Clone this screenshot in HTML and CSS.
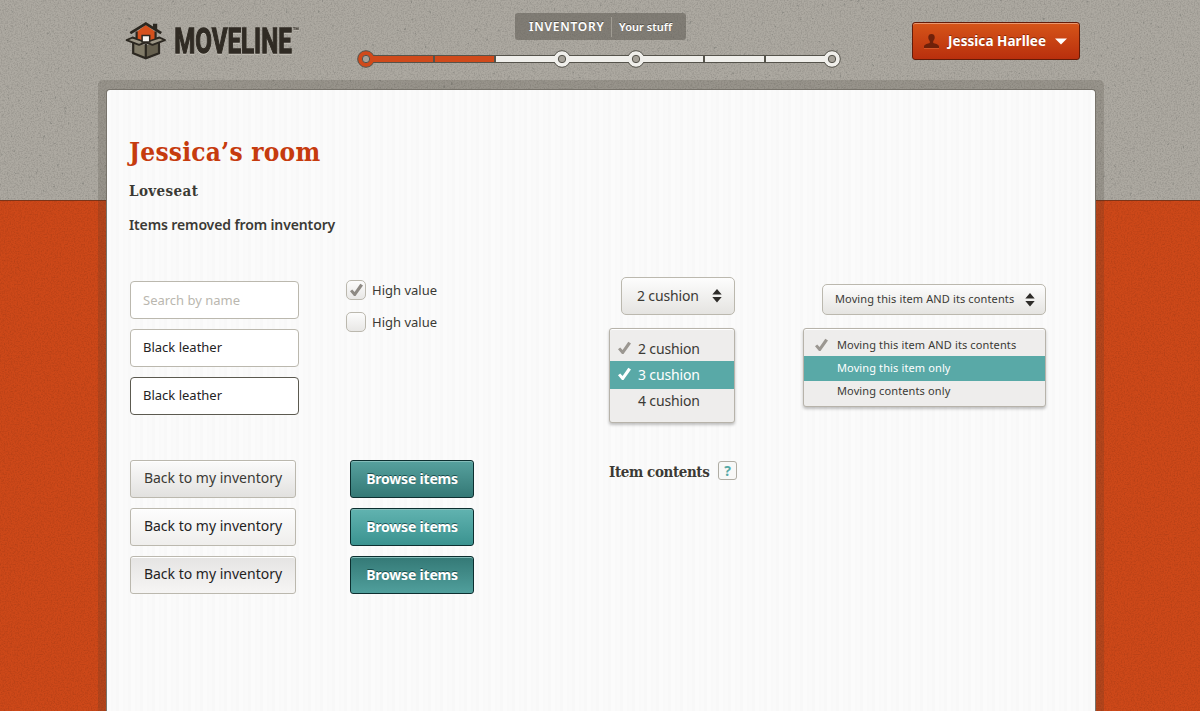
FILE: index.html
```html
<!DOCTYPE html>
<html lang="en">
<head>
<meta charset="utf-8">
<title>Moveline – Inventory</title>
<link rel="stylesheet" href="styles.css">
</head>
<body>
<svg class="texture" width="1200" height="711" aria-hidden="true">
  <defs>
    <filter id="grain" x="0" y="0" width="100%" height="100%">
      <feTurbulence type="fractalNoise" baseFrequency="0.7" numOctaves="2" seed="4"/>
      <feColorMatrix values="0 0 0 0 0  0 0 0 0 0  0 0 0 0 0  0.9 0 0 0 -0.36"/>
    </filter>
    <filter id="specks" x="0" y="0" width="100%" height="100%">
      <feTurbulence type="fractalNoise" baseFrequency="0.28" numOctaves="2" seed="9"/>
      <feColorMatrix values="0 0 0 0 0.2  0 0 0 0 0.2  0 0 0 0 0.18  8 0 0 0 -5.7"/>
    </filter>
  </defs>
  <rect width="1200" height="200" fill="#ada9a1"/>
  <rect y="200" width="1200" height="511" fill="#cd4819"/>
  <rect width="1200" height="200" filter="url(#grain)" opacity=".3"/>
  <rect width="1200" height="200" filter="url(#specks)" opacity=".6"/>
  <rect y="200" width="1200" height="511" filter="url(#grain)" opacity=".25"/>
  <rect y="200" width="1200" height="1" fill="#7d3418"/>
</svg>
<div class="page">
  <header class="header">
    <div class="logo">
      <svg class="logo-mark" width="42" height="38" viewBox="0 0 42 38">
        <path d="M11.500 10 20.800 3 30.500 10V20H11.500z" fill="#d5501c"/>
        <path d="M7.500 19.500 20.800 23.500V36.500L7.500 31z" fill="#817b68"/>
        <path d="M20.800 23.500 34.500 19.500V31L20.800 36.500z" fill="#655f4e"/>
        <path d="M7.500 15.500 20.800 20 34.500 15.500 40 18.200 27.500 22.800 20.800 20.300 14 22.800 1.600 18.200z" fill="#9b9585" stroke="#2b2720" stroke-width="1.900" stroke-linejoin="round"/>
        <path d="M12.700 10 20.800 4 29.500 10V16.600L20.800 19.500 12.700 16.600z" fill="#d5501c"/>
        <path d="M17.100 20v-6.600h7.600v6.600z" fill="#f4f2ed" stroke="#2b2720" stroke-width="1.500"/>
        <path d="M8.200 20.500V31.200L20.800 36.300 34 31.200V20.500M20.800 21.500V36M11.600 9.500v6.500M30.600 9.500v6.500" fill="none" stroke="#2b2720" stroke-width="2.200"/>
        <path d="M5.300 11.200 20.800 1.600 36.200 11.200" fill="none" stroke="#2b2720" stroke-width="2.700"/>
        <path d="M28 1.800h4.200v7L28 6z" fill="#2b2720"/>
      </svg>
      <svg class="logo-word" width="130" height="48" viewBox="0 -5 130 48">
        <text class="wordmark" transform="translate(.2 31) scale(.69 1)">MOVELINE</text>
        <text class="trademark" x="118.500" y="13">™</text>
      </svg>
    </div>
    <div class="progress">
      <div class="stage"><span class="stage-name">INVENTORY</span><span class="stage-sub">Your stuff</span></div>
      <svg class="track" width="486" height="20" viewBox="0 0 486 20">
        <g stroke="#55534b">
          <rect x="10.500" y="6.500" width="466" height="7" fill="#f0efeb"/>
          <path d="M10 6.500h129v7H10z" fill="#d04a1b"/>
          <path d="M78 6v8M139 6v8M348 6v8M409 6v8" stroke-width="2"/>
          <circle cx="10" cy="10" r="8.300" fill="#d04a1b"/>
          <circle cx="206" cy="10" r="8.300" fill="#f0efeb"/>
          <circle cx="280" cy="10" r="8.300" fill="#f0efeb"/>
          <circle cx="476" cy="10" r="8.300" fill="#f0efeb"/>
          <g fill="#a5a198"><circle cx="10" cy="10" r="3.700"/><circle cx="206" cy="10" r="3.700"/><circle cx="280" cy="10" r="3.700"/><circle cx="476" cy="10" r="3.700"/></g>
        </g>
        <path d="M16 7h5v6h-5z" fill="#d04a1b"/>
        <path d="M195 7h5v6h-5zM212 7h5v6h-5zM269 7h5v6h-5zM286 7h5v6h-5zM465 7h5v6h-5z" fill="#f0efeb"/>
      </svg>
    </div>
    <button class="user">
      <svg width="15" height="15" viewBox="0 0 15 15"><path d="M7.500 0C5.200 0 4.100 1.600 4.300 3.800 4.400 5.600 5.300 6.500 5.800 7.200V9C4 9.800.6 10.200 0 12v2h15v-2c-.6-1.800-4-2.200-5.800-3V7.200c.5-.7 1.400-1.600 1.500-3.400C10.900 1.600 9.800 0 7.500 0z" fill="#6f210a"/><path d="M0 14.500h15" stroke="#e0693a" opacity=".6"/></svg>
      <span class="user-name">Jessica Harllee</span>
      <svg width="12" height="7" viewBox="0 0 12 7"><path d="M0 .5h12L6 6.500z" fill="#fff"/></svg>
    </button>
  </header>
  <main class="frame">
    <div class="sheet">
      <h1 class="title">Jessica’s room</h1>
      <h2 class="subtitle">Loveseat</h2>
      <h3 class="section">Items removed from inventory</h3>
      <div class="controls">
        <div class="fields">
          <input class="field field-search" placeholder="Search by name">
          <input class="field" value="Black leather">
          <input class="field field-focus" value="Black leather">
        </div>
        <div class="checks">
          <label class="check"><span class="box"><svg width="15" height="14" viewBox="0 0 15 14"><path d="M1 8.200 3.200 6.400 5.600 9 11.300 .8 14 2.400 6.500 13H5z" fill="#8d8983"/></svg></span>High value</label>
          <label class="check"><span class="box"></span>High value</label>
        </div>
        <div class="picker picker-size">
          <button class="select"><span>2 cushion</span><svg width="10" height="14" viewBox="0 0 10 14"><path d="M5 0 9.700 5.500H.3zM.3 8H9.700L5 13.500z" fill="#2e2c29"/></svg></button>
          <ul class="menu">
            <li class="option"><svg class="tick" width="15" height="14" viewBox="0 0 15 14"><path d="M1 8.200 3.200 6.400 5.600 9 11.300 .8 14 2.400 6.500 13H5z" fill="#9b9791"/></svg><span>2 cushion</span></li>
            <li class="option active"><svg class="tick" width="15" height="14" viewBox="0 0 15 14"><path d="M1 8.200 3.200 6.400 5.600 9 11.300 .8 14 2.400 6.500 13H5z" fill="#fff"/></svg><span>3 cushion</span></li>
            <li class="option"><span>4 cushion</span></li>
          </ul>
        </div>
        <div class="picker picker-scope">
          <button class="select"><span>Moving this item AND its contents</span><svg width="10" height="14" viewBox="0 0 10 14"><path d="M5 0 9.700 5.500H.3zM.3 8H9.700L5 13.500z" fill="#2e2c29"/></svg></button>
          <ul class="menu">
            <li class="option"><svg class="tick" width="15" height="14" viewBox="0 0 15 14"><path d="M1 8.200 3.200 6.400 5.600 9 11.300 .8 14 2.400 6.500 13H5z" fill="#9b9791"/></svg><span>Moving this item AND its contents</span></li>
            <li class="option active"><span>Moving this item only</span></li>
            <li class="option"><span>Moving contents only</span></li>
          </ul>
        </div>
      </div>
      <div class="actions">
        <div class="stack stack-back">
          <button class="btn">Back to my inventory</button>
          <button class="btn btn-hover">Back to my inventory</button>
          <button class="btn btn-down">Back to my inventory</button>
        </div>
        <div class="stack stack-browse">
          <button class="btn primary">Browse items</button>
          <button class="btn primary primary-hover">Browse items</button>
          <button class="btn primary primary-down">Browse items</button>
        </div>
        <div class="contents"><h2 class="contents-title">Item contents</h2><span class="help">?</span></div>
      </div>
    </div>
  </main>
</div>
</body>
</html>
```

FILE: styles.css
```css
* { box-sizing: border-box; }
body { margin: 0; height: 711px; overflow: hidden; background: #cd4819; font-family: "Noto Sans", "Open Sans", sans-serif; color: #3b3a35; }
button, input { font-family: inherit; }
button { white-space: nowrap; }
svg { display: block; flex: none; }
.texture { position: absolute; inset: 0; z-index: -1; }

.header { display: flex; height: 80px; padding-left: 125px; align-items: flex-start; }
.logo { display: flex; width: 231px; padding-top: 22px; gap: 7px; }
.logo-word { margin-top: -5px; filter: drop-shadow(0 1px 0 #c6c2b9); }
.wordmark { font: 700 35px Roboto, sans-serif; fill: #302b24; stroke: #302b24; stroke-width: 1.3px; }
.trademark { font: 700 11px Roboto, sans-serif; fill: #302b24; }
.progress { width: 486px; display: flex; flex-direction: column; align-items: center; padding-top: 13px; }
.stage { display: flex; align-items: center; width: 171px; height: 27px; margin-left: 3px; border-radius: 3px; background: rgba(92, 89, 82, .55); color: #fff; font-weight: 600; white-space: nowrap; text-shadow: 0 -1px 0 rgba(40, 38, 32, .5); }
.stage-name { width: 97px; padding-left: 14px; font-size: 12px; letter-spacing: .75px; line-height: 20px; border-right: 1px solid #a09c93; }
.stage-sub { padding-left: 7px; font-size: 11px; letter-spacing: .05px; }
.track { margin-top: 9px; }
.user { display: flex; align-items: center; width: 168px; height: 38px; margin: 22px 0 0 70px; padding: 0 0 0 11px; border: 1px solid #641b08; border-radius: 3px; background: linear-gradient(#d65519, #b92f0d); box-shadow: inset 0 1px 0 #ea9870; color: #fff; }
.user-name { width: 98px; margin: 0 9px; font-size: 13.5px; font-weight: 700; letter-spacing: .05px; text-align: left; text-shadow: 0 -1px 0 rgba(90, 20, 0, .6); }

.frame { width: 1006px; height: 631px; margin-left: 98px; padding: 9px 8px 0; border-radius: 5px 5px 0 0; background: rgba(60, 55, 42, .18); }
.sheet { height: 622px; padding: 45px 22px 0; border: 1px solid #77736b; border-bottom: 0; border-radius: 4px 4px 0 0; background: repeating-linear-gradient(90deg, #fbfbfb 0 4px, #f9f9f9 4px 6px, #fafafa 6px 9px, #f8f8f8 9px 12px); }
h1, h2, h3 { margin: 0; white-space: nowrap; }
.title { height: 35px; font: bold 26px/35px "DejaVu Serif Condensed", "DejaVu Serif", serif; font-stretch: condensed; letter-spacing: .22px; color: #c63b0e; }
.subtitle { height: 24px; margin-top: 9px; font: bold 15px/24px "DejaVu Serif Condensed", "DejaVu Serif", serif; font-stretch: condensed; letter-spacing: .4px; }
.section { height: 22px; margin-top: 11px; font-size: 14px; line-height: 22px; font-weight: 600; letter-spacing: -.12px; }

.controls { display: flex; height: 183px; margin-top: 41px; padding-left: 1px; }
.fields { width: 216px; padding-top: 4px; display: flex; flex-direction: column; gap: 10px; }
.field { width: 169px; height: 38px; padding: 0 12px 2px; border: 1px solid #bbb8ae; border-radius: 4px; background: #fff; font-size: 13px; color: #24231f; }
.field-search { padding-bottom: 0; }
.field::placeholder { color: #bab7af; opacity: 1; }
.field-focus { border-color: #5c5a50; }
.checks { width: 263px; padding-top: 3px; display: flex; flex-direction: column; gap: 12px; }
.check { display: flex; align-items: center; height: 20px; gap: 6px; font-size: 13px; }
.box { display: grid; place-items: center; width: 20px; height: 20px; border: 1px solid #bbb8ae; border-radius: 5px; background: linear-gradient(#fcfcfc, #e8e7e5); }
.picker { display: flex; flex-direction: column; align-items: flex-end; }
.picker-size { width: 126px; font-size: 14px; letter-spacing: -.15px; }
.picker-scope { width: 243px; margin-left: 68px; padding-top: 7px; font-size: 11px; letter-spacing: .12px; }
.select { display: flex; align-items: center; justify-content: space-between; width: 114px; height: 38px; padding: 0 12px 0 15px; border: 1px solid #bbb8ae; border-radius: 5px; background: linear-gradient(#fdfdfd, #e5e4e1); font-size: inherit; letter-spacing: inherit; color: inherit; }
.select span { padding-bottom: 1px; }
.picker-scope .select { width: 224px; height: 31px; padding: 0 10px 0 12px; }
.picker-scope .select span { padding-bottom: 2px; }
.menu { list-style: none; width: 100%; height: 95px; margin: 13px 0 0; padding: 6px 0 0; border: 1px solid #b7b3aa; border-radius: 3px; background: #eeedec; box-shadow: 0 2px 3px rgba(0, 0, 0, .24), inset 0 1px 0 #fff; }
.option { display: flex; align-items: center; height: 26px; padding-left: 28px; position: relative; white-space: nowrap; }
.tick { position: absolute; left: 7px; top: 6px; }
.active { height: 28px; padding-bottom: 2px; background: #59a9a7; color: #fff; }
.active + .option { height: 22px; }
.picker-scope .menu { height: 79px; padding-top: 4px; }
.picker-scope .option { height: 23px; padding-left: 33px; }
.picker-scope .tick { left: 10px; top: 5px; }
.picker-scope .active { height: 25px; }
.picker-scope .active + .option { height: 19px; }

.actions { display: flex; padding-left: 1px; }
.stack { display: flex; flex-direction: column; gap: 10px; }
.stack-back { width: 220px; }
.stack-browse { width: 259px; }
.btn { width: 166px; height: 38px; padding: 0 0 3px; border: 1px solid #bbb8ae; border-radius: 3px; background: linear-gradient(#fbfbfb, #e2e1df); box-shadow: inset 0 1px 0 #fff; font-size: 14px; color: #3b3a35; }
.btn-hover { background: linear-gradient(#fdfdfd, #efeeec); color: #24231f; }
.btn-down { background: linear-gradient(#e5e4e3, #f6f5f4); color: #24231f; }
.primary { width: 124px; padding-bottom: 1px; border-color: #0d2f30; background: linear-gradient(#57a19e, #347976); box-shadow: inset 0 1px 0 #84bdba; color: #fff; font-weight: 700; letter-spacing: -.2px; text-shadow: 0 -1px 0 rgba(0, 40, 40, .65); }
.primary-hover { background: linear-gradient(#61b3b0, #3b9390); color: #fff; }
.primary-down { background: linear-gradient(#347976, #509f9c); color: #fff; }
.contents { display: flex; height: 24px; }
.contents-title { width: 109px; font: bold 15px/24px "DejaVu Serif Condensed", "DejaVu Serif", serif; font-stretch: condensed; letter-spacing: -.4px; }
.help { width: 19px; height: 19px; margin-top: 1px; border: 1px solid #b0ada4; border-radius: 3px; background: #f8f8f7; color: #55a9a6; font: bold 14px/17px "Noto Sans", sans-serif; text-align: center; }
```
